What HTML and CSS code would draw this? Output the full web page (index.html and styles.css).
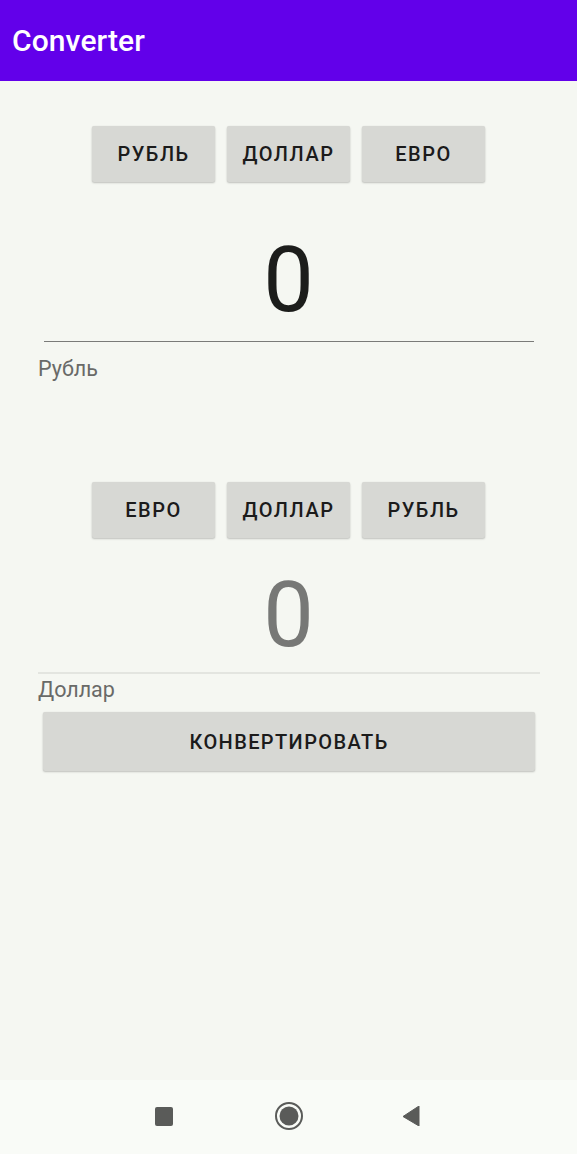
FILE: index.html
```html
<!DOCTYPE html>
<html lang="ru">
<head>
<meta charset="utf-8">
<title>Converter</title>
<link rel="stylesheet" href="styles.css">
</head>
<body>
<div class="screen">
  <header class="appbar"><h1 class="title">Converter</h1></header>
  <main class="content">
    <div class="btn-row row-top">
      <button class="btn">РУБЛЬ</button>
      <button class="btn">ДОЛЛАР</button>
      <button class="btn">ЕВРО</button>
    </div>
    <div class="field field-input">0</div>
    <div class="label label-top">Рубль</div>
    <div class="btn-row row-second">
      <button class="btn">ЕВРО</button>
      <button class="btn">ДОЛЛАР</button>
      <button class="btn">РУБЛЬ</button>
    </div>
    <div class="field field-output">0</div>
    <div class="label label-second">Доллар</div>
    <button class="btn btn-wide">КОНВЕРТИРОВАТЬ</button>
  </main>
  <nav class="navbar">
    <svg class="nav-icon" width="18" height="19" viewBox="0 0 18 19"><rect x="0" y="0" width="18" height="19" rx="2" fill="#5a5b59"/></svg>
    <svg class="nav-icon" width="30" height="30" viewBox="0 0 30 30"><circle cx="15" cy="15" r="13" fill="none" stroke="#5a5b59" stroke-width="2"/><circle cx="15" cy="15" r="9.5" fill="#5a5b59"/></svg>
    <svg class="nav-icon" width="18" height="20" viewBox="0 0 18 20"><path d="M17 0 L17 20 L1 10.5 Z" fill="#5a5b59" stroke="#5a5b59" stroke-width="1" stroke-linejoin="round"/></svg>
  </nav>
</div>
</body>
</html>
```
FILE: styles.css
```css
* { box-sizing: border-box; }
html, body { margin: 0; padding: 0; }
body {
  font-family: Roboto, "Noto Sans", "Liberation Sans", sans-serif;
  background: #f5f7f2;
}
.screen {
  width: 577px;
  height: 1154px;
  display: flex;
  flex-direction: column;
  overflow: hidden;
}
.appbar {
  height: 81px;
  flex: none;
  background: #6200ea;
  display: flex;
  align-items: center;
  padding-left: 12px;
}
.title {
  margin: 0;
  color: #ffffff;
  font-size: 30px;
  font-weight: 500;
  letter-spacing: 0.1px;
}
.content {
  flex: 1;
  display: flex;
  flex-direction: column;
  align-items: center;
}
.btn-row {
  display: flex;
  gap: 12px;
  justify-content: center;
  width: 100%;
}
.row-top { margin-top: 45px; }
.row-second { margin-top: 101px; }
.btn {
  width: 123px;
  height: 56px;
  border: none;
  border-radius: 2px;
  background: #d7d8d4;
  box-shadow: 0 1px 2px rgba(0,0,0,0.22), 0 0 1px rgba(0,0,0,0.08);
  font-family: Roboto, "Noto Sans", "Liberation Sans", sans-serif;
  font-size: 20px;
  font-weight: 500;
  letter-spacing: 1.5px;
  color: #1b1b1b;
  padding: 0;
  text-transform: uppercase;
}
.field {
  text-align: center;
  font-size: 90px;
  line-height: 90px;
  font-weight: 400;
}
.field-input {
  margin-top: 54px;
  width: 490px;
  padding-bottom: 15px;
  border-bottom: 1.5px solid #7a7b79;
  color: #1c1d1b;
}
.field-output {
  margin-top: 33px;
  width: 502px;
  padding-bottom: 11px;
  border-bottom: 2px solid #e3e5e0;
  color: #777876;
}
.label {
  align-self: flex-start;
  margin-left: 38px;
  font-size: 21.5px;
  line-height: 24px;
  color: #696a68;
}
.label-top { margin-top: 15px; }
.label-second { margin-top: 4px; }
.btn-wide {
  margin-top: 10px;
  width: 492px;
  height: 59px;
  margin-left: 1px;
  letter-spacing: 1.4px;
}
.navbar {
  height: 74px;
  flex: none;
  background: #f9fbf7;
  display: flex;
  align-items: center;
  justify-content: flex-start;
  padding-left: 155px;
  padding-bottom: 2px;
}
.nav-icon { display: block; }
.nav-icon:nth-child(1) { margin-right: 101px; }
.nav-icon:nth-child(3) { margin-left: 98px; }
```
